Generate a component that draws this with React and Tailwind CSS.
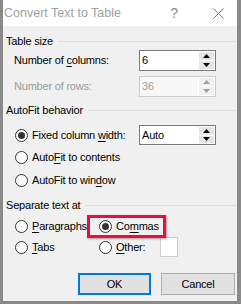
import React from "react";

const font = { fontFamily: '"Liberation Sans", Arial, sans-serif' };

function Radio({ checked }) {
  return (
    <span className="w-[13px] h-[13px] rounded-full border border-[#333] bg-white flex items-center justify-center shrink-0">
      {checked && <span className="w-[7px] h-[7px] rounded-full bg-[#333]" />}
    </span>
  );
}

function U({ children }) {
  return <span className="underline underline-offset-[2px]">{children}</span>;
}

function Spin({ disabled, value, h = "h-[21px]" }) {
  const arrow = disabled ? "#a0a0a0" : "#000";
  const box = disabled ? "border-[#cccccc]" : "border-[#7a7a7a]";
  return (
    <div className={`w-[77px] shrink-0 ${h} border ${box} bg-white flex`}>
      <div className={`flex-1 pl-[2px] flex items-center ${disabled ? "text-[#a0a0a0] bg-[#f7f7f7]" : "text-black"}`}>{value}</div>
      <div className="w-[17px] flex flex-col p-[1px] gap-[1px] bg-white">
        <div className={`flex-1 flex items-center justify-center ${disabled ? "bg-[#f0f0f0]" : "bg-[#e5e5e5]"}`}>
          <svg width="7" height="4" viewBox="0 0 7 4"><path d="M0 4 L3.5 0 L7 4 Z" fill={arrow} /></svg>
        </div>
        <div className={`flex-1 flex items-center justify-center ${disabled ? "bg-[#f0f0f0]" : "bg-[#e5e5e5]"}`}>
          <svg width="7" height="4" viewBox="0 0 7 4"><path d="M0 0 L3.5 4 L7 0 Z" fill={arrow} /></svg>
        </div>
      </div>
    </div>
  );
}

function Header({ children, className = "" }) {
  return (
    <div className={`h-[16px] flex items-center pl-[3px] ${className}`}>
      <span className="whitespace-nowrap">{children}</span>
      <span className="flex-1 h-px bg-[#dcdcdc] ml-[5px]" />
    </div>
  );
}

export default function App() {
  return (
    <div className="w-[241px] h-[304px] bg-[#8a8a8a] pl-[3px] pr-[4px] pb-[3px]" style={font}>
      <div className="w-full h-full flex flex-col bg-[#f0f0f0] text-[11px] tracking-[-0.2px] text-black">
        <div className="h-[26px] bg-white flex items-center shrink-0 tracking-normal">
          <span className="pl-[1px] text-[12.5px] text-[#a0a0a0] whitespace-nowrap">Convert Text to Table</span>
          <span className="ml-auto mr-[35px] text-[14px] text-[#8a8a8a]">?</span>
          <svg className="mr-[13px]" width="11" height="11" viewBox="0 0 11 11">
            <path d="M0.5 0.5 L10.5 10.5 M10.5 0.5 L0.5 10.5" stroke="#777" strokeWidth="1" />
          </svg>
        </div>

        <Header className="mt-[7px]">Table size</Header>

        <div className="mt-[1px] h-[21px] flex items-center pl-[11px]">
          <span className="w-[125px] shrink-0 whitespace-nowrap">Number of <U>c</U>olumns:</span>
          <Spin value="6" />
        </div>
        <div className="mt-[5px] h-[21px] flex items-center pl-[11px] text-[#9a9a9a]">
          <span className="w-[125px] shrink-0 whitespace-nowrap">Number of rows:</span>
          <Spin value="36" disabled />
        </div>

        <Header className="mt-[5px]">AutoFit behavior</Header>

        <div className="mt-[7px] h-[20px] flex items-center pl-[12px]">
          <Radio checked />
          <span className="ml-[4px] w-[107px] shrink-0 whitespace-nowrap">Fixed column <U>w</U>idth:</span>
          <Spin value="Auto" h="h-[20px]" />
        </div>
        <div className="mt-[2px] h-[20px] flex items-center pl-[12px]">
          <Radio />
          <span className="ml-[4px] whitespace-nowrap">Auto<U>F</U>it to contents</span>
        </div>
        <div className="mt-[3px] h-[20px] flex items-center pl-[12px]">
          <Radio />
          <span className="ml-[4px] whitespace-nowrap">AutoFit to win<U>d</U>ow</span>
        </div>

        <Header className="mt-[7px]">Separate text at</Header>

        <div className="mt-[3px] h-[20px] flex items-center pl-[12px]">
          <div className="w-[84px] shrink-0 flex items-center">
            <Radio />
            <span className="ml-[4px] whitespace-nowrap"><U>P</U>aragraphs</span>
          </div>
          <div className="relative flex items-center">
            <Radio checked />
            <span className="ml-[4px] whitespace-nowrap">Co<U>m</U>mas</span>
            <div className="absolute left-[-12px] top-[-3px] w-[79px] h-[23px] border-[3px] border-[#e8103a] shadow-[1px_1px_2px_rgba(0,0,0,0.35)]" />
          </div>
        </div>
        <div className="mt-[1px] h-[20px] flex items-center pl-[12px]">
          <div className="w-[84px] shrink-0 flex items-center">
            <Radio />
            <span className="ml-[4px]"><U>T</U>abs</span>
          </div>
          <div className="w-[61px] shrink-0 flex items-center">
            <Radio />
            <span className="ml-[4px] whitespace-nowrap"><U>O</U>ther:</span>
          </div>
          <div className="w-[18px] h-[20px] border border-[#cccccc] bg-white" />
        </div>

        <div className="mt-[16px] flex pl-[75px] gap-[10px]">
          <div className="w-[73px] h-[22px] border-2 border-[#0078d7] bg-[#e1e1e1] flex items-center justify-center">OK</div>
          <div className="w-[74px] h-[22px] border border-[#adadad] bg-[#e1e1e1] flex items-center justify-center">Cancel</div>
        </div>
      </div>
    </div>
  );
}
